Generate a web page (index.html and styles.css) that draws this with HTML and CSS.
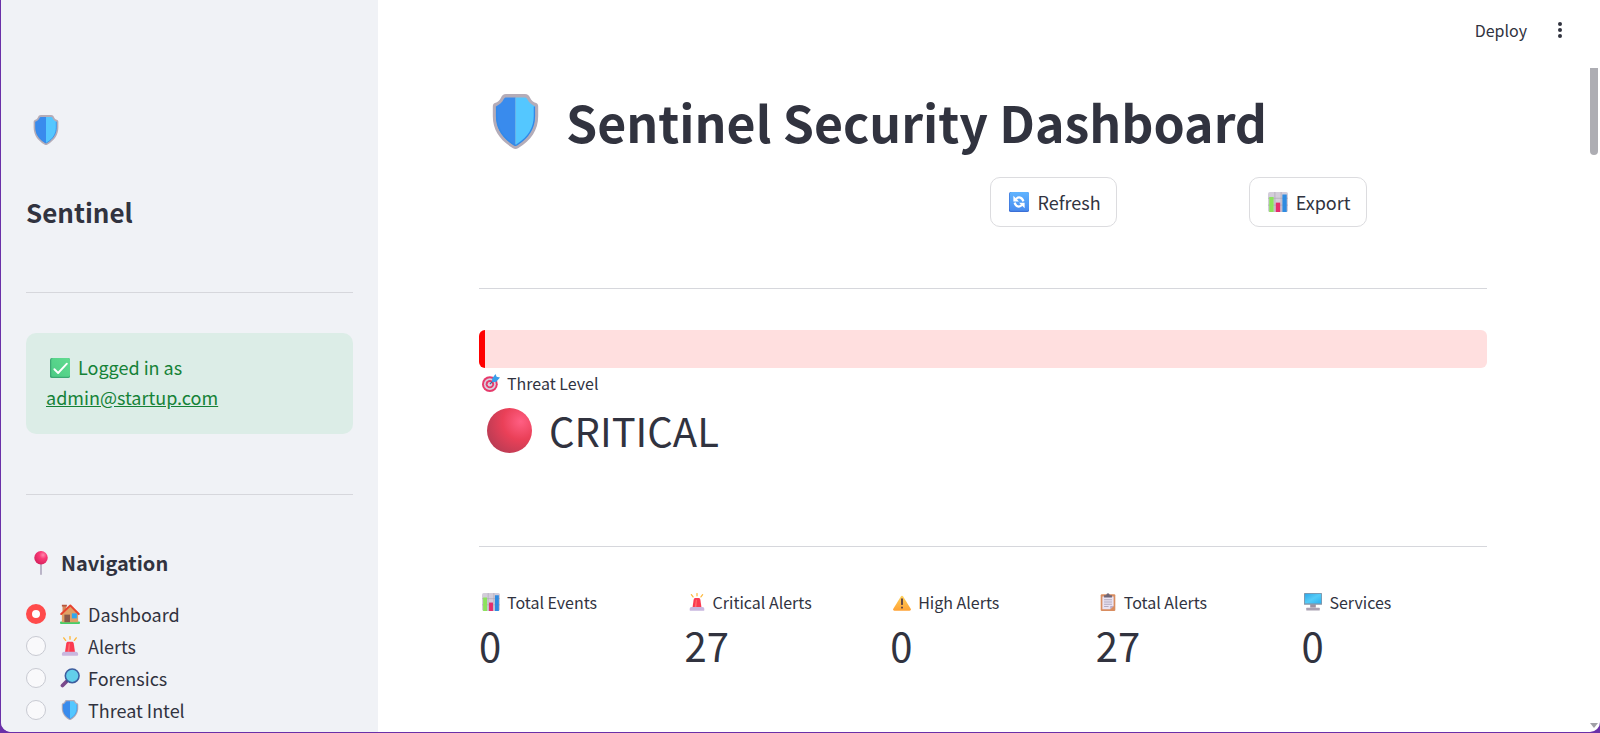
FILE: index.html
```html
<!DOCTYPE html>
<html lang="en">
<head>
    <meta charset="UTF-8">
    <meta name="viewport" content="width=device-width, initial-scale=1.0">
    <title>Sentinel Security Dashboard</title>
    <link rel="stylesheet" href="styles.css">
</head>
<body>
    <!-- Shared icons -->
    <svg class="sprite" aria-hidden="true">
        <defs>
            <linearGradient id="green" x1="0" y1="1" x2="1" y2="0">
                <stop offset="0" stop-color="#4ccb85"/><stop offset="1" stop-color="#62dc90"/>
            </linearGradient>
            <linearGradient id="blue" x1="0" y1="0" x2="0" y2="1">
                <stop offset="0" stop-color="#5fb4ff"/><stop offset="1" stop-color="#4a8df0"/>
            </linearGradient>
            <linearGradient id="screen" x1="0" y1="0" x2="1" y2="1">
                <stop offset="0" stop-color="#2fa8e8"/><stop offset=".5" stop-color="#55ccf8"/><stop offset="1" stop-color="#2bb3f3"/>
            </linearGradient>
            <linearGradient id="amber" x1="0" y1="0" x2="0" y2="1">
                <stop offset="0" stop-color="#ffd05a"/><stop offset="1" stop-color="#ffa234"/>
            </linearGradient>
            <radialGradient id="ball" cx=".75" cy=".3" r=".8">
                <stop offset="0" stop-color="#ff5f83"/><stop offset=".5" stop-color="#ea4058"/><stop offset="1" stop-color="#bd3c54"/>
            </radialGradient>
            <radialGradient id="pinhead" cx=".65" cy=".3" r=".7">
                <stop offset="0" stop-color="#ff87ad"/><stop offset=".4" stop-color="#fa3a76"/><stop offset="1" stop-color="#d8245f"/>
            </radialGradient>
        </defs>
        <symbol id="shield" viewBox="0 0 32 32">
            <path fill="#b4acb8" d="M10.5 0h11c1.600 0 2.300.8 2.900 2 .8 1.700 1.800 2.600 3.600 3.300.8.400 1.200 1 1.200 2V13c0 8-4.200 14-11.500 18.400-1.200.8-2.200.8-3.400 0C7 27 2.800 21 2.800 13V7.300c0-1 .4-1.600 1.200-2C5.800 4.600 6.800 3.700 7.600 2c.6-1.200 1.300-2 2.900-2z"/>
            <path fill="#398bed" d="M16 2h-5.300c-.8 0-1.200.3-1.600 1.100-.9 1.900-2.200 3-4.300 4V13c0 7.200 3.600 12.500 10.200 16.600.4.300.7.400 1 .4z"/>
            <path fill="#54c7ff" d="M16 2h5.300c.8 0 1.200.3 1.600 1.100.9 1.900 2.200 3 4.300 4V13c0 7.200-3.600 12.500-10.200 16.600-.4.300-.7.400-1 .4z"/>
            <path fill="none" stroke="#3289e8" stroke-width=".8" d="M27 7.200V13c0 7.200-3.600 12.400-10 16.500-.7.500-1.300.5-2 0C8.600 25.400 5 20.200 5 13V7.200"/>
        </symbol>
        <symbol id="check" viewBox="0 0 32 32">
            <rect width="32" height="32" rx="3" fill="#3ba873"/>
            <rect x="2" width="30" height="30" rx="3" fill="url(#green)"/>
            <path fill="none" stroke="#fff" stroke-width="3" stroke-linecap="round" stroke-linejoin="round" d="M7 18l6 6L27 9"/>
        </symbol>
        <symbol id="pin" viewBox="0 0 32 32">
            <path stroke="#a9a0b8" stroke-width="2" stroke-linecap="round" d="M16 16v15"/>
            <circle cx="16" cy="9" r="9" fill="url(#pinhead)"/>
        </symbol>
        <symbol id="house" viewBox="0 0 32 32">
            <rect y="28" width="32" height="4" rx="1.500" fill="#46cf68"/>
            <path fill="#d5895d" d="M4 2h6v10H4z"/>
            <path fill="#b8573e" d="M3 1h8v3H3z"/>
            <path fill="#e0a066" d="M3 16L16 4l13 12v13H3z"/>
            <path fill="none" stroke="#e8442f" stroke-width="3.200" stroke-linejoin="round" stroke-linecap="round" d="M2 16L16.500 2.500 30 16"/>
            <rect x="7" y="17" width="9" height="12" fill="#88584b"/>
            <rect x="19" y="15" width="8" height="8" fill="#32a7ee"/>
        </symbol>
        <symbol id="siren" viewBox="0 0 32 32">
            <path stroke="#fdb93c" stroke-width="2.200" stroke-linecap="round" d="M16 1v4M6 3l3 4M26 3l-3 4"/>
            <path fill="#fb3a50" d="M8 26l2-14c.3-2 1.500-3 3.500-3h5c2 0 3.200 1 3.500 3l2 14z"/>
            <path fill="#ff6b6d" d="M14 12h2l-1 13h-3z"/>
            <path fill="#c9b7df" d="M3 29c0-2.500 1-4 4-4h18c3 0 4 1.500 4 4v1c0 1-.5 1.500-1.500 1.500h-23C3.500 31.500 3 31 3 30z"/>
        </symbol>
        <symbol id="search" viewBox="0 0 32 32">
            <path stroke="#7b4a8c" stroke-width="6" stroke-linecap="round" d="M4 28l6-6"/>
            <path stroke="#55407f" stroke-width="3" d="M10 22l4-4"/>
            <circle cx="19.500" cy="12.500" r="11" fill="#62ceea" stroke="#3d5d9e" stroke-width="2.500"/>
        </symbol>
        <symbol id="refresh" viewBox="0 0 32 32">
            <rect width="32" height="32" rx="3" fill="#3b6fd6"/>
            <rect x="1" width="31" height="30" rx="3" fill="url(#blue)"/>
            <path fill="none" stroke="#fff" stroke-width="3.500" d="M11 11.500c4-4.500 10-3.500 12 3.500M21 20.500c-4 4.500-10 3.500-12-3.500"/>
            <path fill="#fff" d="M7 6v9h9zM25 26v-9h-9z"/>
        </symbol>
        <symbol id="chart" viewBox="0 0 32 32">
            <rect width="32" height="32" rx="3" fill="#d3cdda"/>
            <path stroke="#aaa3b2" d="M11 0v32M21 0v32M0 10h32M0 21h32"/>
            <rect x="2" y="8" width="7" height="24" fill="#8be35c"/>
            <rect x="12.500" y="17" width="7" height="15" fill="#e62d6c"/>
            <rect x="23" y="4" width="7" height="28" fill="#2f8be0"/>
        </symbol>
        <symbol id="target" viewBox="0 0 32 32">
            <circle cx="14" cy="18" r="14" fill="#e63a6b"/>
            <circle cx="14" cy="18" r="10.500" fill="#d9d0e0"/>
            <circle cx="14" cy="18" r="7.500" fill="#e63a6b"/>
            <circle cx="14" cy="18" r="4" fill="#d9d0e0"/>
            <path stroke="#31689c" stroke-width="2" d="M14 18L24 8"/>
            <path fill="#3a9eea" d="M18 8l6-8 2 5 6 1-7 8h-7z"/>
        </symbol>
        <symbol id="circle" viewBox="0 0 32 32">
            <circle cx="16" cy="16" r="16" fill="url(#ball)"/>
        </symbol>
        <symbol id="warning" viewBox="0 0 32 32">
            <path fill="url(#amber)" d="M14 6c1-1.600 3-1.600 4 0l13.500 22c1 1.800 0 3.500-2 3.500h-27c-2 0-3-1.700-2-3.500z"/>
            <path stroke="#493447" stroke-width="3" stroke-linecap="round" d="M16 11v9M16 25.500v.5"/>
        </symbol>
        <symbol id="clipboard" viewBox="0 0 32 32">
            <rect x="3" y="2" width="26" height="30" rx="2" fill="#d98d60"/>
            <path fill="#e9e2f2" d="M6 6h20v17l-6 6H6z"/>
            <path fill="#b9aac9" d="M20 29v-6h6z"/>
            <path stroke="#a99fb5" stroke-width="1.500" d="M9 12h14M9 16h14M9 20h14M9 24h8"/>
            <path fill="#6e6677" d="M9 4h4c0-5 6-5 6 0h4v4H9z"/>
        </symbol>
        <symbol id="desktop" viewBox="0 0 32 32">
            <path fill="#9b92a3" d="M11 20h10v6H11z"/>
            <rect x="4" y="26" width="24" height="5" rx="1" fill="#aaa1b2"/>
            <rect y="0" width="32" height="21" rx="1" fill="#8595a8"/>
            <rect x="1.500" y="1.500" width="29" height="17" fill="url(#screen)"/>
        </symbol>
    </svg>

    <div class="app">
        <aside class="sidebar">
            <div class="logo"><svg class="icon"><use href="#shield"/></svg></div>
            <h2>Sentinel</h2>
            <hr>
            <div class="alert-success">
                <svg class="icon"><use href="#check"/></svg>Logged in as<br>
                <a href="mailto:admin@startup.com">admin@startup.com</a>
            </div>
            <hr>
            <h3><svg class="icon"><use href="#pin"/></svg>Navigation</h3>
            <nav class="nav">
                <label><input type="radio" name="page" checked><svg class="icon"><use href="#house"/></svg>Dashboard</label>
                <label><input type="radio" name="page"><svg class="icon"><use href="#siren"/></svg>Alerts</label>
                <label><input type="radio" name="page"><svg class="icon"><use href="#search"/></svg>Forensics</label>
                <label><input type="radio" name="page"><svg class="icon"><use href="#shield"/></svg>Threat Intel</label>
            </nav>
        </aside>

        <main class="main">
            <header class="toolbar">
                <button class="deploy">Deploy</button>
                <button class="menu" aria-label="Menu">
                    <svg viewBox="0 0 6 18"><circle cx="3" cy="3" r="2"/><circle cx="3" cy="9" r="2"/><circle cx="3" cy="15" r="2"/></svg>
                </button>
            </header>
            <div class="content">
                <h1><svg class="icon"><use href="#shield"/></svg>Sentinel Security Dashboard</h1>
                <div class="actions">
                    <div></div>
                    <div><button class="btn"><svg class="icon"><use href="#refresh"/></svg>Refresh</button></div>
                    <div><button class="btn"><svg class="icon"><use href="#chart"/></svg>Export</button></div>
                </div>
                <hr>
                <div class="threat-bar"></div>
                <div class="metric threat">
                    <div class="metric-label"><svg class="icon"><use href="#target"/></svg>Threat Level</div>
                    <div class="metric-value"><svg class="icon"><use href="#circle"/></svg>CRITICAL</div>
                </div>
                <hr>
                <div class="metrics">
                    <div class="metric">
                        <div class="metric-label"><svg class="icon"><use href="#chart"/></svg>Total Events</div>
                        <div class="metric-value">0</div>
                    </div>
                    <div class="metric">
                        <div class="metric-label"><svg class="icon"><use href="#siren"/></svg>Critical Alerts</div>
                        <div class="metric-value">27</div>
                    </div>
                    <div class="metric">
                        <div class="metric-label"><svg class="icon"><use href="#warning"/></svg>High Alerts</div>
                        <div class="metric-value">0</div>
                    </div>
                    <div class="metric">
                        <div class="metric-label"><svg class="icon"><use href="#clipboard"/></svg>Total Alerts</div>
                        <div class="metric-value">27</div>
                    </div>
                    <div class="metric">
                        <div class="metric-label"><svg class="icon"><use href="#desktop"/></svg>Services</div>
                        <div class="metric-value">0</div>
                    </div>
                </div>
            </div>
        </main>

        <div class="scrollbar">
            <div class="thumb"></div>
            <div class="arrow"></div>
        </div>
    </div>
</body>
</html>
```
FILE: styles.css
```css
* {
    box-sizing: border-box;
}
body {
    margin: 0;
    height: 100vh;
    padding: 0 0 1px 1px;
    background: #6a30a8;
    color: #31333f;
    font-family: "Noto Sans CJK SC", "Noto Sans", sans-serif;
    font-size: 18px;
    line-height: 30px;
    overflow: hidden;
}
h1, h2, h3 {
    margin: 0;
    font-weight: bold;
}
hr {
    width: 100%;
    height: 1px;
    margin: 0;
    border: none;
    background: #d6d7dc;
}
button {
    font-family: inherit;
    color: inherit;
    cursor: pointer;
}
.sprite {
    position: absolute;
    width: 0;
    height: 0;
}
.icon {
    width: 20px;
    height: 20px;
    flex: none;
}
.app {
    display: flex;
    height: 100%;
    background: white;
    border-radius: 0 0 10px 10px;
    overflow: hidden;
}

/* Sidebar */
.sidebar {
    width: 377px;
    flex: none;
    padding: 110px 25px 0;
    background: #f0f2f6;
    overflow: hidden;
}
.logo {
    display: flex;
    align-items: center;
    height: 40px;
    padding-left: 5px;
}
.logo .icon {
    width: 30px;
    height: 30px;
}
.sidebar h2 {
    margin: 44px 0 62px;
    font-size: 26px;
    line-height: 36px;
}
.alert-success {
    margin: 40px 0 60px;
    padding: 19px 20px 22px;
    border-radius: 10px;
    background: #dcede7;
    color: #158237;
}
.alert-success .icon {
    margin: 0 8px 0 4px;
    vertical-align: -3px;
}
.alert-success a {
    color: inherit;
}
.sidebar h3 {
    display: flex;
    align-items: center;
    gap: 8px;
    margin: 53px 0 20px;
    padding-left: 3px;
    font-size: 20px;
}
.sidebar h3 .icon {
    width: 24px;
    height: 24px;
}
.nav label {
    display: flex;
    align-items: center;
    height: 32px;
    cursor: pointer;
}
.nav input {
    appearance: none;
    width: 20px;
    height: 20px;
    margin: 0 14px 0 0;
    border: 1px solid #c8cad2;
    border-radius: 50%;
    background: #f9f9fb;
}
.nav input:checked {
    border: 6px solid #ff4b4b;
    background: white;
}
.nav .icon {
    margin-right: 8px;
}

/* Main area */
.main {
    flex: 1;
    min-width: 0;
}
.toolbar {
    display: flex;
    justify-content: flex-end;
    align-items: center;
    gap: 30px;
    height: 60px;
    padding-right: 25px;
}
.deploy, .menu {
    padding: 0;
    border: none;
    background: none;
    font-size: 16px;
}
.menu svg {
    display: block;
    width: 6px;
    height: 18px;
    fill: #31333f;
}
.content {
    padding: 31px 101px 0;
}
h1 {
    display: flex;
    align-items: center;
    gap: 23px;
    padding-left: 9px;
    font-size: 50px;
    line-height: 60px;
    white-space: nowrap;
}
h1 .icon {
    width: 55px;
    height: 55px;
}
.actions {
    display: grid;
    grid-template-columns: 33fr 16fr 16fr;
    gap: 20px;
    margin: 26px 0 61px;
}
.btn {
    display: flex;
    align-items: center;
    gap: 8px;
    height: 50px;
    padding: 0 15px 0 18px;
    border: 1px solid #dcdcdf;
    border-radius: 10px;
    background: white;
    font-size: 18px;
}
.threat-bar {
    height: 38px;
    margin: 41px 0 2px;
    border-left: 6px solid #ff0000;
    border-radius: 6px;
    background: #ffdfdf;
}
.metric-label {
    display: flex;
    align-items: center;
    gap: 7px;
    padding-left: 3px;
    font-size: 16px;
    line-height: 26px;
    white-space: nowrap;
}
.metric-label .icon {
    width: 18px;
    height: 18px;
}
.metric-value {
    display: flex;
    align-items: center;
    margin-top: 4px;
    font-size: 40px;
    line-height: 52px;
}
.threat {
    margin-bottom: 90px;
}
.threat .metric-value {
    gap: 17px;
    margin-top: 8px;
    padding-left: 8px;
}
.threat .metric-value .icon {
    width: 45px;
    height: 45px;
}
.metrics {
    display: grid;
    grid-template-columns: repeat(5, 1fr);
    gap: 20px;
    margin-top: 42px;
}

/* Scrollbar */
.scrollbar {
    display: flex;
    flex-direction: column;
    justify-content: space-between;
    width: 12px;
    padding: 68px 2px 4px;
}
.thumb {
    width: 8px;
    height: 87px;
    border-radius: 0 0 4px 4px;
    background: #adadb3;
}
.arrow {
    border: 4px solid transparent;
    border-top: 5px solid #a0a0a6;
    border-bottom: none;
}
```
